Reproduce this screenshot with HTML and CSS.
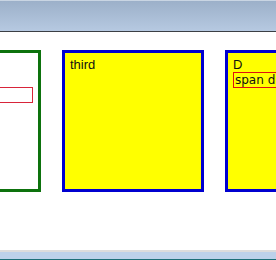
FILE: index.html
```html
<!DOCTYPE html>
<html lang="en">
<head>
    <meta charset="UTF-8">
    <title>Boxes</title>
    <link rel="stylesheet" href="styles.css">
</head>
<body>
    <div class="titlebar"></div>
    <div class="viewport">
        <div class="row">
            <div class="box box-green">
                <div class="spacer"></div>
                <div class="spacer"></div>
                <div class="outlined"></div>
            </div>
            <div class="box box-yellow">
                <div class="line">third</div>
            </div>
            <div class="box box-yellow">
                <div class="line">D</div>
                <div class="outlined span-text">span display block</div>
            </div>
        </div>
    </div>
    <div class="statusbar"></div>
</body>
</html>
```

FILE: styles.css
```css
* {
    margin: 0;
    padding: 0;
    box-sizing: border-box;
}

body {
    font-family: 'Liberation Sans', Arial, sans-serif;
    font-size: 13px;
    background: white;
    width: 276px;
    height: 260px;
    overflow: hidden;
}

.titlebar {
    height: 32px;
    background: linear-gradient(to bottom, #9cb0c9 0%, #b6c9e1 100%);
    border-top: 1px solid #c9d5e3;
    border-bottom: 1px solid #3c3f44;
}

.viewport {
    height: 218px;
    padding-top: 18px;
    overflow: hidden;
}

.row {
    display: flex;
    gap: 21px;
    margin-left: -101px;
}

.box {
    flex: 0 0 142px;
    height: 142px;
    border: 3px solid;
    padding: 4px 5px;
    overflow: hidden;
}

.box-green {
    border-color: #0d720d;
    background: white;
}

.box-yellow {
    border-color: #0000d0;
    background: #ffff00;
}

.line {
    line-height: 15px;
    color: #111;
    white-space: nowrap;
}

.spacer {
    height: 15px;
}

.outlined {
    border: 1px solid #d8243a;
    height: 16px;
    line-height: 14px;
    white-space: nowrap;
}

.span-text {
    font-family: 'DejaVu Sans', sans-serif;
    font-size: 12px;
    color: #111;
    padding-left: 1px;
    border-color: #e01010;
}

.statusbar {
    height: 10px;
    background: #bcd1ea;
    border-top: 2px solid #dcdcdc;
    border-bottom: 1px solid #1c6f78;
}
```
